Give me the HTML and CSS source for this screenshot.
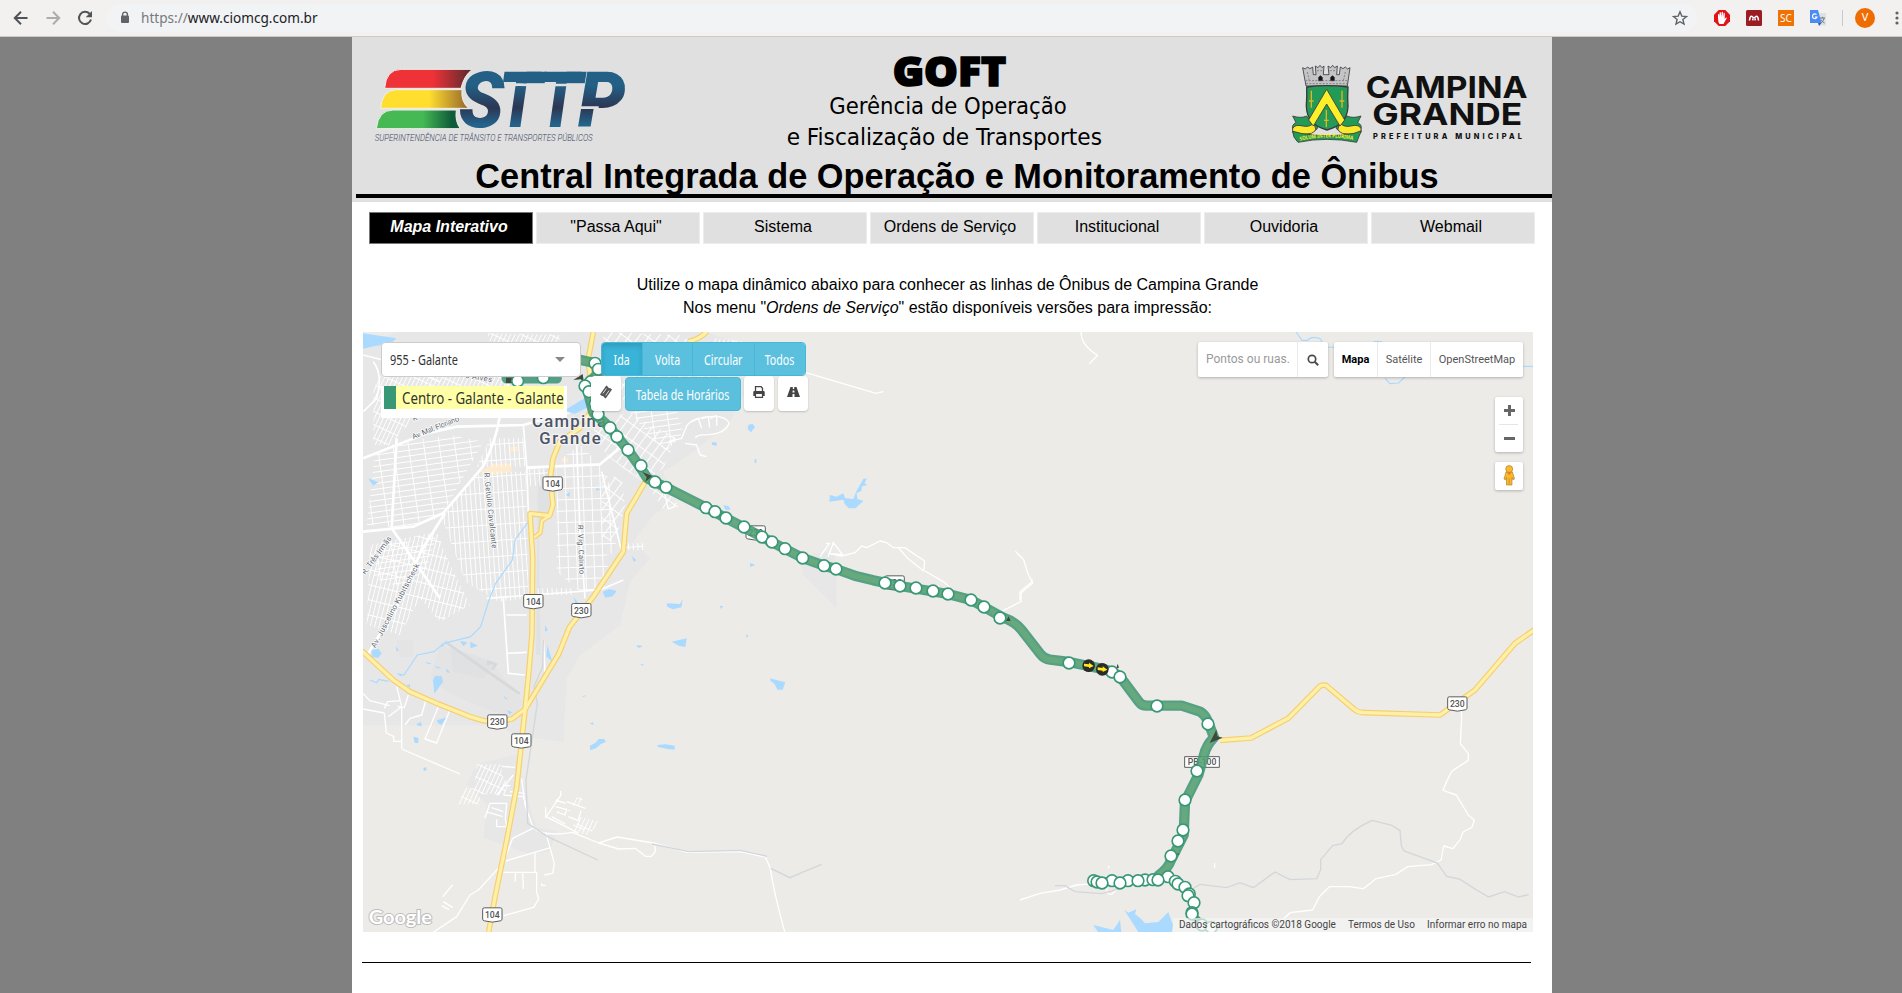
FILE: index.html
```html
<!DOCTYPE html>
<html lang="pt-BR">
<head>
<meta charset="utf-8">
<title>CIOM - Campina Grande</title>
<link rel="stylesheet" href="styles.css">
</head>
<body>
<div class="toolbar">
  <svg class="nav-ico" width="16" height="16" viewBox="0 0 16 16"><path d="M14.500 8H2.200M8 1.800 1.800 8 8 14.200" fill="none" stroke="#505357" stroke-width="2"/></svg>
  <svg class="nav-ico" width="16" height="16" viewBox="0 0 16 16"><path d="M1.500 8h12.300M8 1.800 14.200 8 8 14.200" fill="none" stroke="#acacac" stroke-width="2"/></svg>
  <svg class="nav-ico" width="16" height="16" viewBox="0 0 16 16"><path d="M12.600 3.800A6.100 6.100 0 1 0 14 9.600" fill="none" stroke="#505357" stroke-width="2"/><path d="M15 1v6.300H8.700z" fill="#505357"/></svg>
  <div class="omnibox">
    <svg width="10" height="13" viewBox="0 0 10 13"><rect x="1" y="4.500" width="8" height="7.500" rx="1" fill="#5f6368"/><path d="M2.600 5V3.500a2.400 2.400 0 0 1 4.800 0V5" fill="none" stroke="#5f6368" stroke-width="1.400"/></svg>
    <span class="url"><i>https://</i>www.ciomcg.com.br</span>
    <svg class="star" width="16" height="16" viewBox="0 0 16 16"><path d="m8 1.800 1.800 4.300 4.700.4-3.600 3 1.100 4.600L8 11.700l-4 2.400 1.100-4.600-3.600-3 4.700-.4z" fill="none" stroke="#5f6368" stroke-width="1.400"/></svg>
  </div>
  <div class="exts">
    <svg width="16" height="16" viewBox="0 0 16 16"><path d="M4.700 0h6.600L16 4.700v6.600L11.300 16H4.700L0 11.300V4.700z" fill="#e0131b"/><path d="M4 8V4.500q.8-.8 1.200 0V7l.5-4.500q.8-.6 1.200 0L7.300 7l.4-5q.8-.6 1.200 0L9 7l.7-4q.8-.5 1.100.2L10.700 9l1.300-1.400q.9 0 .7.700L10.300 12.500 9.500 14h-4Q4 12 4 8z" fill="#fff"/></svg>
    <svg width="16" height="16" viewBox="0 0 16 16"><rect width="16" height="16" rx="1.500" fill="#9b1c22"/><path d="M3.500 10.500C3.800 7.500 4.600 6.300 5.500 6.300S7 7.800 8 7.800s1.600-1.500 2.500-1.500 1.700 1.200 2 4.200M6.700 10.300 7 8.500M9.300 10.300 9 8.500" fill="none" stroke="#fff" stroke-width="1.600"/></svg>
    <span class="sc">SC</span>
    <svg width="16" height="16" viewBox="0 0 16 16"><path d="M7 3h9v12.500H9z" fill="#dde1e4"/><path d="M0 0h8l3.500 13H0z" fill="#4c8bf5"/><path d="M8 13h3.500L9 16z" fill="#3a5bb5"/><path d="M6.500 4.700A2.300 2.300 0 1 0 7 7H4.900" fill="none" stroke="#fff" stroke-width="1.200"/><path d="M10 8h5M12.500 6.800V8M10.800 13q3-2 3.400-5M11 9.500q1 2.300 3.500 3.500" fill="none" stroke="#607078" stroke-width=".9"/></svg>
    <span class="sep"></span>
    <span class="avatar">V</span>
    <svg width="4" height="16" viewBox="0 0 4 16"><g fill="#5f6368"><circle cx="2" cy="3" r="1.600"/><circle cx="2" cy="8" r="1.600"/><circle cx="2" cy="13" r="1.600"/></g></svg>
  </div>
</div>

<main class="page">
<svg class="banner" viewBox="6 3 3600 495">
  <defs>
    <linearGradient id="gr"><stop offset=".55" stop-color="#ee3237"/><stop offset=".98" stop-color="#5c2a2e"/></linearGradient>
    <linearGradient id="gy"><stop offset=".55" stop-color="#ffde2f"/><stop offset=".98" stop-color="#9a6b2c"/></linearGradient>
    <linearGradient id="gg"><stop offset=".55" stop-color="#46b955"/><stop offset=".9" stop-color="#0e5c39"/></linearGradient>
    <linearGradient id="gb" gradientUnits="userSpaceOnUse" x1="0" y1="100" x2="0" y2="276"><stop offset=".28" stop-color="#245f86"/><stop offset=".65" stop-color="#2c3753"/><stop offset=".95" stop-color="#23648c"/></linearGradient>
  </defs>
  <g stroke="#f0f0ee" stroke-width="3">
    <path d="M104 157q4-57 50-57h213q-26 20-34 57z" fill="url(#gr)"/>
    <path d="M92 217q4-56 48-56h196q-4 36 20 56z" fill="url(#gy)"/>
    <path d="M79 278q6-56 50-56h190q-5 34 12 56z" fill="url(#gg)"/>
  </g>
  <g class="sttp" fill="url(#gb)">
    <text x="326" y="274" textLength="136" lengthAdjust="spacingAndGlyphs">S</text>
    <text x="446" y="274" textLength="118" lengthAdjust="spacingAndGlyphs">T</text>
    <text x="566" y="274" textLength="118" lengthAdjust="spacingAndGlyphs">T</text>
    <text x="684" y="274" textLength="142" lengthAdjust="spacingAndGlyphs">P</text>
    <path d="M530 107.500h60l-6 34h-60zM650 107.500h60l-6 34h-60z"/>
  </g>
  <path d="M464 147q50-2 76 0h48M584 147h116M680 215h66" fill="none" stroke="#e0e0e0" stroke-width="8"/>
  <text class="sttp-sub" x="74" y="315" textLength="654" lengthAdjust="spacingAndGlyphs">SUPERINTENDÊNCIA DE TRÂNSITO E TRANSPORTES PÚBLICOS</text>

  <text class="goft" x="1628" y="151" textLength="340" lengthAdjust="spacingAndGlyphs">GOFT</text>
  <text class="ger" x="1438" y="234" textLength="712" lengthAdjust="spacingAndGlyphs">Gerência de Operação</text>
  <text class="ger" x="1310" y="327" textLength="946" lengthAdjust="spacingAndGlyphs">e Fiscalização de Transportes</text>
  <text class="central" x="376" y="456" textLength="2890" lengthAdjust="spacingAndGlyphs">Central Integrada de Operação e Monitoramento de Ônibus</text>
  <path d="M18 480h3600" stroke="#000" stroke-width="12"/>

  <g transform="translate(2430)">
    <g stroke="#3a3a3c" stroke-width="2.500">
      <path d="M438 150 428 95 436 99 442 93 450 98 458 93 460 116 468 116 466 90 474 95 480 88 486 95 492 90 490 116 507 116 504 90 512 95 518 88 524 95 532 90 530 116 538 116 541 93 549 98 556 93 563 99 570 95 562 150z" fill="#c4c4c6"/>
      <path d="M436 134h128M438 143h124M442 108l6 26M556 108l-6 26M471 104h16M509 104h16" fill="none" stroke="#77777a" stroke-dasharray="6 4"/>
      <path d="M476 134v-10q5-9 11 0v10zM512 134v-10q5-9 11 0v10z" fill="#111"/>
      <path d="M398 240q25 8 42 0l18 24q18 0 14 14-16 18-48 10l-26-8q-4-14 10-20z" fill="#239b56"/>
      <path d="M603 240q-25 8-42 0l-18 24q-18 0-14 14 16 18 48 10l26-8q4-14-10-20z" fill="#239b56"/>
      <path d="M398 278q6-14 30-8 20 4 30-6 20 18-4 28-28 8-56-2zM603 278q-6-14-30-8-20 4-30-6-20 18 4 28 28 8 56-2z" fill="#fde92b"/>
      <path d="M440 153q60-8 124 0-2 30 0 58-2 56-63 71-60-15-62-71 2-30 1-58z" fill="#239b56" stroke-width="4"/>
      <path d="m500 160-54 92 14 18 40-66 40 66 14-18z" fill="#fdf02b"/>
      <path d="M398 286q20 4 24 6 78 14 160 0l22-8-14 35q-90-18-176 0-16-15-16-33z" fill="#239b56"/>
    </g>
    <path d="M454 164v40m-7-9h14m-7 0v20M546 164v40m-7-9h14m-7 0v20M499 222v40m-7-9h14m-7 0v20" fill="none" stroke="#e0b61d" stroke-width="4"/>
    <path id="rib" d="M420 314q80-18 162-2" fill="none"/>
    <text class="motto"><textPath href="#rib" textLength="160" lengthAdjust="spacingAndGlyphs">SOLUM INTER PLURIMA</textPath></text>
    <text class="cg" x="617" y="187" textLength="486" lengthAdjust="spacingAndGlyphs">CAMPINA</text>
    <text class="cg" x="637" y="266" textLength="450" lengthAdjust="spacingAndGlyphs">GRANDE</text>
    <text class="pm" x="639" y="308" textLength="447">PREFEITURA MUNICIPAL</text>
  </g>
</svg>

<nav class="menu">
  <a class="on">Mapa Interativo</a><a>"Passa Aqui"</a><a>Sistema</a><a>Ordens de Serviço</a><a>Institucional</a><a>Ouvidoria</a><a>Webmail</a>
</nav>

<p class="intro">Utilize o mapa dinâmico abaixo para conhecer as linhas de Ônibus de Campina Grande<br>Nos menu "<em>Ordens de Serviço</em>" estão disponíveis versões para impressão:</p>

<section class="map">
<svg class="canvas" viewBox="9 21 3510 1800">
  <defs>
    <pattern id="h1" width="46" height="17" patternUnits="userSpaceOnUse" patternTransform="rotate(-8)"><path d="M0 1h46M1 0v17" stroke="#fff" stroke-width="3.500"/></pattern>
    <pattern id="h2" width="14" height="48" patternUnits="userSpaceOnUse" patternTransform="rotate(-4)"><path d="M0 1h14M1 0v48" stroke="#fff" stroke-width="3.500"/></pattern>
    <pattern id="h3" width="24" height="40" patternUnits="userSpaceOnUse" patternTransform="rotate(36)"><path d="M0 1h24M1 0v40" stroke="#fff" stroke-width="4"/></pattern>
    <pattern id="h4" width="13" height="44" patternUnits="userSpaceOnUse" patternTransform="rotate(14)"><path d="M0 1h13M1 0v44" stroke="#fff" stroke-width="3.500"/></pattern>
    <pattern id="h5" width="26" height="34" patternUnits="userSpaceOnUse" patternTransform="rotate(-2)"><path d="M0 1h26M1 0v34" stroke="#fff" stroke-width="3.500"/></pattern>
    <pattern id="h6" width="12" height="36" patternUnits="userSpaceOnUse" patternTransform="rotate(25)"><path d="M0 1h12M1 0v36" stroke="#fff" stroke-width="3.500"/></pattern>
    <g id="stop"><circle r="17.500" fill="#fff" stroke="#389876" stroke-width="5"/></g>
    <g id="shield"><path d="M7 1.500h48q6 0 5 6v28q0 4-5 5-24 8-48 0-5-1-5-5v-28q-1-6 5-6z" fill="#fff" stroke="#5c5c5c" stroke-width="3"/></g>
    <g id="bus"><circle r="19" fill="#2b2b2b"/><path d="M-14-6 1-4v-5L15 1 1 8V4l-15-2z" fill="#ffeb1c"/></g>
    <path id="br104" d="M700 21 685 100l14 150-40 60-60 40-20 50-8 60 8 80-10 32-59-6 8 130-2 230-9 110-12 120-12 110-13 120-30 160-35 170-19 105"/>
    <path id="br230" d="m862 460-62 105-10 115-90 135-72 92-32 80-100 165-40 30-44 9-42-4-40-12-95-38-85-37-50-35-95-88M985 50q35-8 56-31"/>
    <path id="br230e" d="m2580 1246 93-7 112-59 95-97q8-4 18-2l87 74q12 8 30 8l225 7 105-75 120-140 60-42"/>
    <path id="line" d="M640 100 706 115 726 135 678 180 690 225 700 262 750 308 804 375 843 430 862 460 918 487 1038 548 1206 636 1328 699 1392 722 1428 732 1490 754 1540 766 1620 783 1764 807 1833 825 1872 846 1930 878Q1965 890 1985 915L2042 988Q2052 1002 2070 1004L2127 1011 2220 1030Q2270 1040 2284 1060L2338 1132Q2345 1142 2360 1142H2465L2520 1160Q2535 1168 2544 1190L2562 1237Q2538 1262 2532 1290L2515 1350 2475 1430 2471 1530 2433 1605Q2425 1630 2395 1652"/>
  </defs>
  <path d="M9 21h3510v1800H9z" fill="#ecebe8"/>
  <!-- built-up areas -->
  <g fill="#e7e7e8">
    <path d="M9 60 110 21h930l110 40-40 60 60 60-60 110-110 90-90 60 30 90-60 40-60 80 50 50-60 70-30 130-120 90-40 70-10 190-140-20-60-30H9z"/>
    <path d="m240 960 160 60 90 110-30 50-90-30-110-50-50-40zM110 945h50v50h-40z" fill="#e4e4e4"/>
    <path d="m350 1318 120-30 20 80 20 80 20 60 60 10-20 60-60 10-140-50 10-100-60-60zM1320 690l100-10 10 40 0 130-50-50-50-50z"/>
  </g>
  <g fill="#dcdde0"><path d="m270 965 140 50-40 45-90-20z" opacity=".5"/><path d="m534 470 40-60-2 130-16 40-20 60 6 350-14 0z" opacity=".6"/></g>
  <g fill="#fdebd0"><path d="m360 440 40-24h55v24l-60 10zM448 365h26v14h-26zM605 400h20v12h-20z"/></g>
  <!-- street grids -->
  <g>
    <path d="M120 60h380v140l-140 30-180 30-90 100H40V190z" fill="url(#h6)"/>
    <path d="M45 390 110 350l160-20 100 20-130 230-120 30-100-10z" fill="url(#h1)"/>
    <path d="M390 340h100l10 85H350zM505 430l60 2-10 50h-50z" fill="url(#h2)"/>
    <path d="m370 440 126 0 10 380-90 10-100-60-70-190 80-110z" fill="url(#h2)"/>
    <path d="m30 660 200-40 40 100 60 120-90 50-60-70-60 110-100-30z" fill="url(#h4)"/>
    <path d="M60 650h120l50-20-30 100-70 60-90-30z" fill="url(#h1)"/>
    <path d="m590 410 70-50 60 60 30 60 20 200-30 10 10 100-90 10-70-60z" fill="url(#h5)"/>
    <path d="m690 320 110-60 150 80-40 90-60 40-60-40-50-40z" fill="url(#h3)"/>
    <path d="m790 240 160 20 20 60-50 60-60-60z" fill="url(#h1)"/>
    <path d="m730 21 230 10 160 90-130 130-190-20-80-60z" fill="url(#h3)"/>
    <path d="m1060 40 100 10-20 40-90-20zM380 25l230 5-20 25-200-4z" fill="url(#h6)"/>
    <path d="m725 450 60 10 10 80-30 110-40-10z" fill="url(#h3)"/>
    <path d="m795 655 55 0v20l-55 0zM520 790h120v20H525z" fill="url(#h2)"/>
    <path d="m870 490 60 20 30 35-50 10z" fill="url(#h3)"/>
    <path d="m350 1318 75 0 0 30 20 30-10 30-60 0-15 0v30h-67l20-48 30 0z" fill="url(#h6)"/>
    <path d="m640 1418 28 0-8 24h-26zM660 1475l62 16-38 40-46-10z" fill="url(#h6)"/>
  </g>
  <!-- local roads -->
  <g fill="none" stroke="#fff" stroke-width="4" stroke-linejoin="round">
    <path stroke-width="8" d="M9 400 200 325l90-20 200-5 180-50M9 620l150-15 90-40 120-140q40-80 50-150l30-120M25 985l90-150 70-160 70-110M110 340 95 610 240 820M500 428l220-10 60-50"/>
    <path stroke-width="5" d="M40 110q30 40 10 110l-40 40M9 90l120 30 110 50M490 300l10 120 5 140M500 430l60-5M650 360l10 260 15 200M725 440l40 160 20 80M380 820l340-25 70-30M430 820l15 225 50 5M440 870h60M440 985l60-3M550 945l5 95"/>
    <path d="M925 350l40-10 12-30q10-30 70-35 50-5 60 20-10 30-60 34-40 0-40 10M975 355l35 5 10 30 20 5M1338 143l210 62 22-5M2163 21q0 40 50 70l-25 25"/>
    <path d="M995 290l20-10 10 30M1025 282l20-8 4 34M1050 280l20-8 0 30M870 490l40 0 15 62 20-8"/>
    <path d="m1380 695 28-40-10 0m20-5 30 40-40-5m-4 10 16-40M1405 685l40 8 40-10 20-20 15 5 40-20 20 5 20 15 34 0 60 40-3 30-50-40-28-32M1695 738l60 35 15 15M1966 679l25 25 12 40 15 30-35 30 0 25-58 30"/>
    <path d="M9 1105l20 22 60 15M9 1152l64 12M73 1164l6 60 22 10 0 15 24 0M125 1270 125 1145 110 1085M125 1272l175 75M73 1150l10-20 40-3M85 1175l40-30M145 1110l-12 38-20-4M135 1200l15-20 35-10 12-42M235 1145l-40 97 35 12 40-100"/>
    <path d="M465 1327 425 1324M410 1410l50-60M485 1360l10 80M495 1440l25 70M518 1507q30 30 120 15l78 32 60 18 50-2 30 24h18l12-15-2-18M716 1554l55-18 110 18 100 28 160-2 75 16 15 34q10 70 44 194h40l25 10 38-10M558 1475l95 48M558 1525l25 90-5 30-25 5M518 1510l-60 30-20 50M437 1608l135-40M525 1585v60M430 1642h100l0 60 6 20-15 25-90 25M415 1630l-60 65-25 15-40 65-70 47M466 1642v28M488 1642l2 50M545 1675l0 6h12M278 1680l-30 35M250 1730l28 18M245 1742l22 12"/>
    <path d="M602 1398v14l-45 65 0-30M587 1425l30 10M587 1445l44 12M620 1430l56 20M590 1460l25 10 5-20M625 1475l30 12 8-30M640 1500l35 15M575 1475l40 22M375 1480l15-45 50 0-4 45 4 25-30 0v-22M378 1460l50 15M395 1448l35 12M415 1410l15-28 20 0M430 1410l60 5 8 25M450 1400l44 5"/>
    <path d="M1980 825v-25l36-30 0-8M1980 1725l60-20 60-10 50-15 60-5M2240 1690q0 20 15 18l16-15M2246 1622v8M2564 1615v14M2700 1813l70-30 20-20 68-8 20-40 30-30 60 0 42 6 38-30 60-13 35-23 72-6 28-14 8-42 28 8 22-28 8-22 26-13 8-22-18-16-36-60-40-14q20-50 30-60l46-30-0-20-24-30 4-80-4-50"/>
  </g>
  <!-- railway -->
  <path d="m550 945-2 80-26 60 10 50-34 230 5 130 60 40 150 70M2085 1682l30 0 30 18 80 6 30-8 60-20M876 1557l110 23 155-4 80 18M1232 1630l58 28 35-15 60-25M2500 1690l20-12 80 10 40-15 40 15 65-47 45 23 80-3 12-27 0-30 36-42 28-6q24-40 90-70l60 15 24 16 4 45 8 16 78 28 22 8 28 40 38 8 50 32 38 22 48-16 42 16 30-7" fill="none" stroke="#d3d7da" stroke-width="4"/>
  <!-- airport runway -->
  <path d="m255 950 225 157M385 1020l0-10 22 8-10 16" fill="none" stroke="#d7d8da" stroke-width="8"/>
  <!-- water -->
  <g fill="#aadaff">
    <path d="m9 25 70 10 30 5-15 15-60 10-25 6zM610 258l70-42 25 20-60 30zM25 460l30 12-16 10zM1165 300l12-4 8 10-12 16-10-10zM1055 352h14l2 10-14-2zM1184 402h5v12h-5zM1090 540l16 4 6 10-16 0z"/>
    <path d="m728 800 20-8 22 6-12 16-22 4zM920 835l40 2 8-14-4 24-26 6-16-8zM935 950l45-10-4 26-20-4zM815 692l14 14-8 4zM1170 714l16 6-16 6zM1080 842l10 2-8 8zM832 960l14 4-10 6zM1158 928l8 6-6 4zM555 900v20l8-4zM640 815l8 24 6-6zM618 510l12-10-2 16zM708 490l14 2-12 6z"/>
    <path d="m1410 510 20 5 20-10 5 15 25 2 10-25 20-35 10-2-6 16 10 4-18 4-2 14-14 6 2 18 18 6-24 22h-20l-12-14-4-12-42 6z"/>
    <path d="m35 975 20-4 10 14-10 14-20-4zM225 1052l20 2 4 16-26 36-4-40zM198 1010l20 8-16-2zM222 1022l24 8-14 0zM258 1030l14 14-12-2zM108 963l8 12-6 6zM245 955l10 4-12 8zM300 948l22 4-12 12zM330 950l24 12-22 8zM562 960l15 50-18-16zM430 1110l14 14-8-2zM440 1156l18 6-10 6zM230 1186l28-8-14 22-10-6zM168 1200l14-10 4 14zM160 1235l16 4-2 16-10-2zM190 1330l8-4 2 10-8 2zM115 1052l10-4 0 6zM140 1080l10-2 0 10z"/>
    <path d="m690 1276 0-14 16-8 10-12h16l6 8-16 8-14 12zM892 1260l24-2 28 4v12l-20-2-30-6zM1230 1060l22 6 24 6-8 22-16 0-8-16-12-10zM830 962h16v4h-16zM840 1018h12l-4 4zM666 1114l12-4-6 6zM690 1196l8-4 4 8z"/>
    <path d="m2200 1800 60 15 20-30 4 36h-70zM2293 1755l12 8 24-10-4 14 18 14 12 14 40-4 30-30 14 40-4 20h-40l-60 0z"/>
  </g>
  <g fill="none" stroke="#aadaff" stroke-width="3.500">
    <path d="m505 590-40 55-8 60-50 70-20 50-25 80-30 30-80 20-30 25-50 10-40 60-20-4M30 1065l20 8 6-10 30 6"/>
    <path d="M2808 21l18 25 16 0q15-16 40-4l10 24 40 1M3075 160l15 16 26-2 20-20M3040 50h26M3485 124h36"/>
  </g>
  <!-- highways -->
  <g fill="none" stroke="#f5cf70" stroke-width="17" stroke-linejoin="round">
    <path d="m570 572-24 15-5 36-18 14" stroke-width="14"/>
    <use href="#br104"/><use href="#br230"/><use href="#br230e"/>
  </g>
  <g fill="none" stroke="#fff0a8" stroke-width="10" stroke-linejoin="round">
    <path d="m570 572-24 15-5 36-18 14" stroke-width="7"/>
    <use href="#br104"/><use href="#br230"/><use href="#br230e"/>
  </g>
  <!-- road labels -->
  <g class="road">
    <text transform="translate(160 343) rotate(-22)" textLength="150">Av. Mal. Floriano</text>
    <text transform="translate(372 444) rotate(84)" textLength="228">R. Getúlio Cavalcante</text>
    <text transform="translate(653 600) rotate(88)" textLength="148">R. Vig. Calixto</text>
    <text transform="translate(46 970) rotate(-62)" textLength="282">Av. Juscelino Kubitscheck</text>
    <text transform="translate(16 750) rotate(-54)" textLength="135">R. Três Irmãs</text>
    <text transform="translate(316 158) rotate(10)" textLength="80">s Alves</text>
    <text transform="translate(160 288) rotate(-12)" textLength="26">R.</text>
  </g>
  <g class="city">
    <text x="516" y="307" textLength="222">Campina</text>
    <text x="538" y="357" textLength="184">Grande</text>
  </g>
  <g class="sh">
    <use href="#shield" x="547" y="454"/><text x="578" y="486">104</text>
    <use href="#shield" x="489" y="807"/><text x="520" y="840">104</text>
    <use href="#shield" x="633" y="834"/><text x="664" y="867">230</text>
    <use href="#shield" x="381" y="1168"/><text x="412" y="1200">230</text>
    <use href="#shield" x="453" y="1225"/><text x="484" y="1257">104</text>
    <use href="#shield" x="366" y="1747"/><text x="397" y="1779">104</text>
    <use href="#shield" x="3261" y="1114"/><text x="3292" y="1146">230</text>
    <use href="#shield" x="1156" y="601"/><text x="1187" y="634">230</text>
    <use href="#shield" x="1573" y="751"/><text x="1604" y="784">230</text>
    <path d="M2474 1295h104v32h-104z" fill="#fff" stroke="#5c5c5c" stroke-width="3"/><text x="2526" y="1320" textLength="86">PB-100</text>
  </g>
  <!-- bus line 955 -->
  <g fill="none" stroke-linejoin="round" stroke-linecap="round" opacity=".87">
    <path d="M440 160h150" stroke="#3f9577" stroke-width="31"/>
    <use href="#line" stroke="#409678" stroke-width="31"/>
    <use href="#line" stroke="#53a06d" stroke-width="17"/>
    <path d="M2210 1668 2390 1664 2424 1655 2460 1675 2485 1700 2500 1735 2496 1768 2530 1802 2555 1808" stroke="#409678" stroke-width="22"/>
  </g>
  <g fill="#3d4a3c">
    <path d="M640 165l28-18 4 26-10-10zM846 440l32 14-22 16 4-14zM1938 888l8-14 6 14zM2549 1254 2569 1214 2572 1234 2588 1238zM2269 1030l4-14 4 12zM438 158h18v16h-18zM2450 1586h10l-6 4z"/>
  </g>
  <g>
    <use href="#stop" x="473" y="168"/><use href="#stop" x="550" y="158"/><use href="#stop" x="705" y="115"/><use href="#stop" x="715" y="133"/><use href="#stop" x="692" y="170"/><use href="#stop" x="675" y="183"/><use href="#stop" x="687" y="200"/><use href="#stop" x="706" y="236"/><use href="#stop" x="714" y="268"/><use href="#stop" x="750" y="308"/><use href="#stop" x="771" y="335"/><use href="#stop" x="804" y="375"/><use href="#stop" x="843" y="422"/><use href="#stop" x="885" y="471"/><use href="#stop" x="918" y="487"/><use href="#stop" x="1038" y="548"/><use href="#stop" x="1065" y="560"/><use href="#stop" x="1098" y="579"/><use href="#stop" x="1152" y="606"/><use href="#stop" x="1206" y="636"/><use href="#stop" x="1236" y="651"/><use href="#stop" x="1275" y="671"/><use href="#stop" x="1328" y="699"/>
    <use href="#stop" x="1392" y="722"/><use href="#stop" x="1428" y="732"/><use href="#stop" x="1575" y="774"/><use href="#stop" x="1620" y="783"/><use href="#stop" x="1668" y="789"/><use href="#stop" x="1719" y="798"/><use href="#stop" x="1764" y="807"/><use href="#stop" x="1833" y="825"/><use href="#stop" x="1872" y="846"/><use href="#stop" x="1920" y="879"/>
  </g>
  <g transform="translate(1980 765)">
    <use href="#stop" x="147" y="249"/><use href="#stop" x="276" y="276"/><use href="#stop" x="300" y="291"/><use href="#stop" x="411" y="378"/><use href="#stop" x="564" y="432"/><use href="#stop" x="531" y="573"/><use href="#stop" x="495" y="660"/><use href="#stop" x="489" y="750"/><use href="#stop" x="474" y="783"/><use href="#stop" x="453" y="828"/>
    <use href="#stop" x="221" y="902"/><use href="#stop" x="231" y="906"/><use href="#stop" x="276" y="902"/><use href="#stop" x="246" y="909"/><use href="#stop" x="324" y="902"/><use href="#stop" x="300" y="909"/><use href="#stop" x="375" y="900"/><use href="#stop" x="354" y="902"/><use href="#stop" x="399" y="899"/><use href="#stop" x="444" y="890"/><use href="#stop" x="414" y="900"/><use href="#stop" x="466" y="904"/><use href="#stop" x="474" y="912"/><use href="#stop" x="495" y="922"/><use href="#stop" x="508" y="942"/><use href="#stop" x="504" y="947"/><use href="#stop" x="522" y="968"/><use href="#stop" x="516" y="998"/><use href="#stop" x="516" y="1002"/><use href="#stop" x="546" y="1035"/><use href="#stop" x="574" y="1042"/>
    <use href="#bus" x="206" y="257"/><use href="#bus" x="247" y="268"/>
  </g>
  <text class="google" x="26" y="1796" textLength="190" lengthAdjust="spacingAndGlyphs">Google</text>
</svg>

<div class="left-panel">
  <div class="select"><span class="nar">955 - Galante</span><i class="caret"></i></div>
  <div class="legend"><div class="legend-row"><b></b><span class="nar big">Centro - Galante - Galante</span></div></div>
</div>
<div class="dirs">
  <div class="group"><span class="b on"><i class="nar">Ida</i></span><span class="b b2"><i class="nar">Volta</i></span><span class="b b3"><i class="nar">Circular</i></span><span class="b b4"><i class="nar">Todos</i></span></div>
</div>
<div class="tools">
  <span class="wb"><svg width="14" height="14" viewBox="0 0 14 14"><g transform="rotate(-55 7 7)"><path d="M1.500 3.500h11v2q-1.300 1.500 0 3v2h-11v-2q1.300-1.500 0-3z" fill="#555"/><path d="M4 5.300h6M4 8.700h6" stroke="#ddd" stroke-width=".9"/></g></svg></span>
  <span class="tab"><i class="nar">Tabela de Horários</i></span>
  <span class="wb"><svg width="12" height="12" viewBox="0 0 12 12"><path d="M2.500 5.500v-5h5.500l1.500 1.700v3.300" fill="none" stroke="#444" stroke-width="1.300"/><path d="M.3 6q0-1 1-1h9.400q1 0 1 1v4H9.500V8h-7v2H.3z" fill="#444"/><path d="M2.500 8v3.400h7V8" fill="none" stroke="#444" stroke-width="1.200"/></svg></span>
  <span class="wb"><svg width="13" height="12" viewBox="0 0 13 12"><path d="M3.500 1h2.300v2h1.400V1h2.300L13 11H7.500V8h-2v3H0zM5.700 4.500l-.2 2h2l-.2-2z" fill="#444" fill-rule="evenodd"/></svg></span>
</div>
<div class="right-bar">
  <div class="box"><span class="ph">Pontos ou ruas.</span><span class="mag"><svg width="12" height="12" viewBox="0 0 12 12"><circle cx="5" cy="5" r="3.700" fill="none" stroke="#4a4a4a" stroke-width="1.700"/><path d="m7.700 7.700 3.500 3.500" stroke="#4a4a4a" stroke-width="2"/></svg></span></div>
  <div class="box types"><span class="cur">Mapa</span><span class="sat">Satélite</span><span class="osm">OpenStreetMap</span></div>
</div>
<div class="zoom">
  <div class="box zb"><svg width="28" height="55" viewBox="0 0 28 55"><path d="M9 13.500h11M14.500 8v11M9 41.500h11" stroke="#666" stroke-width="3"/><path d="M4 27.500h19" stroke="#e6e6e6"/></svg></div>
  <div class="box peg"><svg width="28" height="28" viewBox="0 0 28 28"><g fill="#fbb829" stroke="#a5762c" stroke-width=".6"><path d="M11 10h6.500l2 7-1.500.8-1-2.300V23H11.500v-7.500l-1 2.300L9 17z"/><circle cx="14.200" cy="7" r="3.500"/></g><path d="M12 10.500h4.500L14.200 13z" fill="#e57d1c"/><path d="M14.200 16v6.500" stroke="#d08a1c" stroke-width=".8"/></svg></div>
</div>
<div class="credits"><span>Dados cartográficos ©2018 Google</span><span>Termos de Uso</span><span>Informar erro no mapa</span></div>
</section>
<div class="rule"></div>
</main>
</body>
</html>
```
FILE: styles.css
```css
* { box-sizing: border-box; }
html, body { height: 100%; }
body { margin: 0; overflow: hidden; background: #808080; font-family: "Liberation Sans", Arial, sans-serif; display: flex; flex-direction: column; }
i { font-style: normal; }
svg { display: block; flex: none; }

.toolbar { flex: none; height: 37px; background: #f2f1f0; border-bottom: 1px solid #cbcac9; display: flex; align-items: center; padding: 0 3px 1px 13px; }
.nav-ico { margin-right: 16px; }
.omnibox { flex: 1; margin-left: -2px; margin-right: 17px; height: 28px; border-radius: 14px; background: #f1f3f4; display: flex; align-items: center; padding: 0 9px 0 13px; }
.url { font: 13.6px "Noto Sans", sans-serif; color: #202124; margin-left: 11px; flex: 1; }
.url i { color: #767a7e; }
.exts { display: flex; align-items: center; gap: 16px; }
.sc { width: 16px; height: 16px; background: #ef7202; color: #fff; font: 10px/16px "Noto Sans", sans-serif; text-align: center; }
.sep { width: 1px; height: 16px; background: #c9c9c9; margin-right: -4px; }
.avatar { width: 20px; height: 20px; border-radius: 50%; background: #ef6c00; color: #fff; font: 11px/20px Roboto, sans-serif; text-align: center; margin-right: 4px; }

.page { flex: 1; width: 1200px; margin-left: 352px; background: #fff; }
.banner { width: 1200px; height: 165px; background: #e0e0e0; }
.sttp { font: italic 900 234px Roboto, sans-serif; }
.sttp-sub { font: italic 300 26px Roboto, sans-serif; fill: #3a4663; }
.goft { font: 800 120px "Open Sans", sans-serif; stroke: #000; stroke-width: 5px; }
.ger { font: 71px "DejaVu Sans Condensed", "DejaVu Sans", sans-serif; }
.central { font: bold 104px "Liberation Sans", sans-serif; }
.motto { font: bold 16px "Noto Sans", sans-serif; fill: #fdf02b; }
.cg { font: 750 89px Inter, sans-serif; fill: #111; }
.pm { font: 800 22px Inter, sans-serif; fill: #111; }

.menu { display: flex; gap: 3px; padding: 10px 0 0 17px; }
.menu a { width: 164px; height: 32px; background: #e0e0e0; border: 1px solid #ededed; padding-right: 4px; text-align: center; font-size: 16px; line-height: 27px; color: #000; }
.menu .on { background: #000; color: #fff; border-color: #777; font-weight: bold; font-style: italic; }

.intro { margin: 29px 0 0; padding-right: 9px; text-align: center; font-size: 16px; line-height: 23px; color: #000; height: 59px; }

.map { position: relative; width: 1170px; height: 600px; margin-left: 11px; overflow: hidden; }
.canvas { width: 1170px; height: 600px; }
.road { font: 23px Roboto, sans-serif; fill: #5d6670; stroke: #fff; stroke-width: 4px; paint-order: stroke; }
.city { font: 500 50px Roboto, sans-serif; fill: #4c5566; stroke: #f2f2f2; stroke-width: 8px; paint-order: stroke; }
.sh text { font: 500 26px Roboto, sans-serif; fill: #555; text-anchor: middle; }
.google { font: 700 58px Lato, sans-serif; fill: #fff; stroke: #bdbdbd; stroke-width: 6px; paint-order: stroke; }

.nar { display: inline-block; white-space: nowrap; font: 14px "Noto Sans", sans-serif; transform: scaleX(.76); }
.left-panel { position: absolute; left: 18px; top: 10px; }
.select { width: 200px; height: 35px; background: #fff; border: 1px solid #ccc; border-radius: 4px; display: flex; align-items: center; justify-content: space-between; padding: 0 15px 0 8px; color: #333; }
.select .nar, .legend .nar { transform-origin: left; }
.select .nar { transform: scaleX(.78); }
.caret { border: 5px solid transparent; border-top-color: #888; border-bottom: 0; }
.legend { width: 186px; height: 32px; background: #fff; margin-top: 9px; padding: 0 3px; }
.legend-row { display: flex; align-items: center; height: 23px; background: #ffffa6; color: #333; width: 180px; }
.legend-row b { width: 12px; height: 23px; background: #389876; margin-right: 6px; flex: none; }
.legend .nar.big { font-size: 17px; transform: scaleX(.782); }
.dirs { position: absolute; left: 238px; top: 10px; }
.group { display: flex; border: 1px solid #46b8da; border-radius: 4px; overflow: hidden; height: 34px; width: 205px; }
.b { background: #5bc0de; color: #fff; display: flex; align-items: center; justify-content: center; border-right: 1px solid #46b8da; }
.b.on { width: 41px; background: #39b3d7; box-shadow: inset 0 3px 5px rgba(0,0,0,.13); }
.b2 { width: 50px; }
.b3 { width: 62px; }
.b4 { width: 50px; border-right: 0; }
.tools { position: absolute; left: 228px; top: 44px; display: flex; gap: 4px; }
.wb { width: 30px; height: 35px; background: #fff; border-radius: 4px; box-shadow: 0 1px 2px rgba(0,0,0,.2); display: flex; align-items: center; justify-content: center; padding-bottom: 4px; }
.tab { width: 116px; height: 34px; margin-top: 1px; margin-right: -1px; background: #5bc0de; border: 1px solid #46b8da; border-radius: 4px; color: #fff; display: flex; align-items: center; justify-content: center; }
.right-bar { position: absolute; right: 10px; top: 10px; display: flex; gap: 6px; font: 11px/35px Roboto, sans-serif; }
.box { background: #fff; border-radius: 2px; box-shadow: 0 1px 3px rgba(0,0,0,.25); display: flex; height: 35px; }
.ph { width: 100px; padding-left: 8px; color: #9a9a9a; font-size: 12px; border-right: 1px solid #eaeaea; white-space: nowrap; }
.mag { width: 30px; display: flex; align-items: center; justify-content: center; }
.types span { text-align: center; color: #565656; border-right: 1px solid #eaeaea; }
.types .cur { width: 44px; color: #000; font-weight: 700; }
.types .sat { width: 53px; }
.types .osm { width: 92px; border: 0; }
.zoom { position: absolute; right: 10px; top: 65px; display: grid; gap: 10px; width: 28px; }
.zb { height: 55px; }
.peg { height: 28px; }
.credits { position: absolute; right: 0; bottom: 0; height: 14px; display: flex; background: rgba(245,245,245,.7); font: 10px/14px Roboto, sans-serif; color: #444; white-space: nowrap; }
.credits span { padding: 0 6px; }
.rule { height: 1px; background: #000; margin: 30px 21px 0 10px; }
```
